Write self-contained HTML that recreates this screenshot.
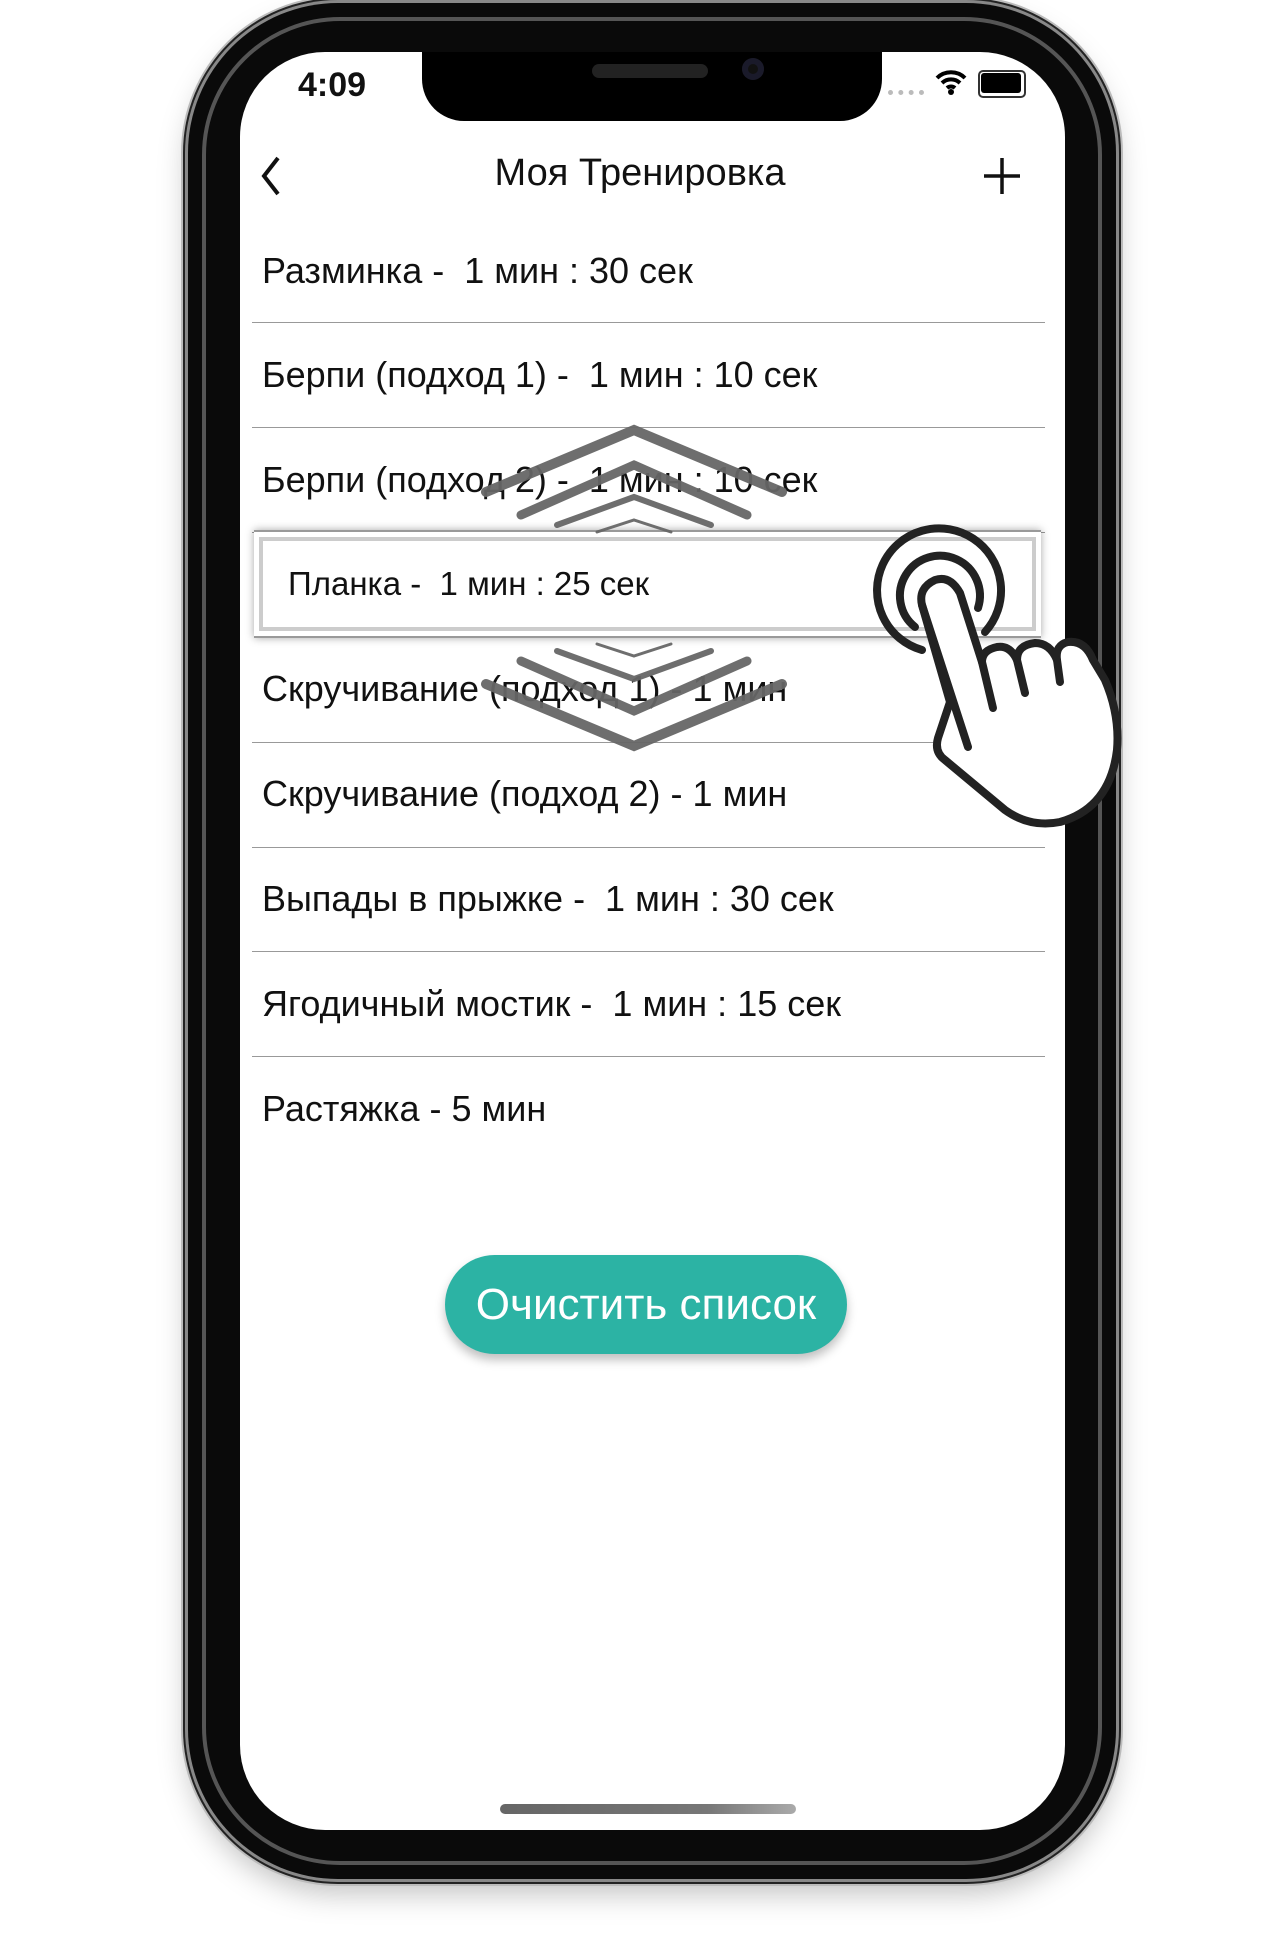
<!DOCTYPE html>
<html><head><meta charset="utf-8"><style>
html,body{margin:0;padding:0;background:#fff;}
body{width:1287px;height:1948px;position:relative;overflow:hidden;font-family:"Liberation Sans","DejaVu Sans",sans-serif;}
.phone{position:absolute;left:188px;top:3px;width:928px;height:1876px;border-radius:150px;background:#0a0a0a;
 box-shadow:0 0 0 3px #888,0 0 0 5px #222,0 0 0 7px #bbb,0 14px 30px rgba(0,0,0,.25);}
.rim{position:absolute;left:14px;top:14px;right:14px;bottom:14px;border-radius:138px;border:4px solid #555;}
.screen{position:absolute;left:240px;top:52px;width:825px;height:1778px;background:#fff;border-radius:85px;overflow:hidden;}
.notch{position:absolute;left:182px;top:-2px;width:460px;height:71px;background:#000;border-radius:0 0 42px 42px;}
.btn{position:absolute;background:#333;border-radius:3px;}
.t{position:absolute;white-space:nowrap;color:#111;}
.row{position:absolute;left:22px;font-size:36px;color:#111;white-space:nowrap;}
.sep{position:absolute;left:12px;width:793px;height:1px;background:#999;}
</style></head><body>
<div class="btn" style="left:182px;top:256px;width:8px;height:70px"></div>
<div class="btn" style="left:182px;top:394px;width:8px;height:131px"></div>
<div class="btn" style="left:182px;top:562px;width:8px;height:138px"></div>
<div class="btn" style="left:1114px;top:437px;width:8px;height:213px"></div>
<div class="phone"><div class="rim"></div></div>
<div class="screen">
 <div class="notch">
  <div style="position:absolute;left:170px;top:14px;width:116px;height:14px;border-radius:7px;background:#222"></div>
  <div style="position:absolute;left:320px;top:8px;width:22px;height:22px;border-radius:50%;background:#111;box-shadow:inset 0 0 0 6px #1a1a2a"></div>
 </div>
 <div class="t" style="left:58px;top:14px;font-size:34px;font-weight:bold;">4:09</div>
 <div style="position:absolute;left:648px;top:38px;width:36px;height:5px;border-top:5px dotted #bbb"></div>
 <svg style="position:absolute;left:694px;top:16px" width="34" height="28" viewBox="0 0 34 28"><path d="M3 10a20 20 0 0 1 28 0M8 15a13 13 0 0 1 18 0M13 20a6 6 0 0 1 8 0" stroke="#000" stroke-width="4" fill="none"/><circle cx="17" cy="24" r="3"/></svg>
 <div style="position:absolute;left:738px;top:18px;width:40px;height:20px;border:2px solid #333;border-radius:5px;padding:2px;box-sizing:content-box"><div style="width:40px;height:20px;background:#000;border-radius:3px;margin:-1px"></div></div>
 <svg style="position:absolute;left:14px;top:100px" width="40" height="50" viewBox="0 0 40 50"><path d="M24 6L10 24l14 18" stroke="#111" stroke-width="4" fill="none"/></svg>
 <div class="t" style="left:0;width:800px;text-align:center;top:100px;font-size:38px;">Моя Тренировка</div>
 <svg style="position:absolute;left:740px;top:102px" width="44" height="44"><path d="M22 4v36M4 22h36" stroke="#111" stroke-width="3.5"/></svg>

 <div class="row" style="top:198px">Разминка -&nbsp; 1 мин : 30 сек</div>
 <div class="sep" style="top:270px"></div>
 <div class="row" style="top:302px">Берпи (подход 1) -&nbsp; 1 мин : 10 сек</div>
 <div class="sep" style="top:375px"></div>
 <div class="row" style="top:407px">Берпи (подход 2) -&nbsp; 1 мин : 10 сек</div>
 <div class="sep" style="top:480px"></div>
 <div class="row" style="top:616px">Скручивание (подход 1) - 1 мин</div>
 <div class="sep" style="top:690px"></div>
 <div class="row" style="top:721px">Скручивание (подход 2) - 1 мин</div>
 <div class="sep" style="top:795px"></div>
 <div class="row" style="top:826px">Выпады в прыжке -&nbsp; 1 мин : 30 сек</div>
 <div class="sep" style="top:899px"></div>
 <div class="row" style="top:931px">Ягодичный мостик -&nbsp; 1 мин : 15 сек</div>
 <div class="sep" style="top:1004px"></div>
 <div class="row" style="top:1036px">Растяжка - 5 мин</div>

 <div style="position:absolute;left:14px;top:478px;width:787px;height:108px;background:#fff;box-shadow:0 0 8px rgba(0,0,0,.35);border-top:2px solid #999;border-bottom:2px solid #999;box-sizing:border-box">
  <div style="position:absolute;left:5px;top:5px;right:5px;bottom:5px;border:4px solid #ccc"></div>
  <div class="t" style="left:34px;top:33px;font-size:33px;">Планка -&nbsp; 1 мин : 25 сек</div>
 </div>

 <svg style="position:absolute;left:0;top:0" width="825" height="800" viewBox="240 52 825 800">
  <g fill="none" stroke="#666" stroke-linecap="round" stroke-opacity=".95">
   <path d="M486 492L634 430L782 492" stroke-width="10"/>
   <path d="M521 515L634 465L747 515" stroke-width="9"/>
   <path d="M557 525L634 497L711 525" stroke-width="6"/>
   <path d="M597 532L634 520L671 532" stroke-width="3"/>
   <path d="M486 684L634 746L782 684" stroke-width="10"/>
   <path d="M521 661L634 711L747 661" stroke-width="9"/>
   <path d="M557 651L634 679L711 651" stroke-width="6"/>
   <path d="M597 644L634 656L671 644" stroke-width="3"/>
  </g>
 </svg>

 <div style="position:absolute;left:205px;top:1203px;width:402px;height:99px;border-radius:50px;background:#2cb3a4;box-shadow:0 6px 10px rgba(0,0,0,.25);color:#fff;font-size:44px;text-align:center;line-height:99px;">Очистить список</div>
 <div style="position:absolute;left:260px;top:1752px;width:296px;height:10px;border-radius:5px;background:linear-gradient(90deg,#666,#777 70%,#aaa)"></div>
</div>

<svg style="position:absolute;left:0;top:0" width="1287" height="1948">
 <g fill="none" stroke="#222" stroke-width="8" stroke-linecap="round">
  <path d="M922 650A62 62 0 1 1 985 632"/>
  <path d="M915 627A40 40 0 1 1 978 608"/>
 </g>
 <path d="M950 702L938 738Q934 752 945 760L1005 810Q1030 828 1060 822Q1110 808 1117 750Q1120 715 1105 680L1093 660Q1085 640 1068 642Q1055 645 1057 660Q1050 643 1035 643Q1017 645 1017 660Q1010 645 997 647Q982 650 982 662L960 593Q950 575 935 580Q918 588 922 605Z" fill="#fff" stroke="#222" stroke-width="8" stroke-linejoin="round"/>
 <g stroke="#222" stroke-width="8" stroke-linecap="round" fill="none">
  <path d="M922 605L968 747"/>
  <path d="M982 662L993 708"/>
  <path d="M1017 660L1025 693"/>
  <path d="M1057 660L1060 682"/>
 </g>
</svg>
</body></html>
